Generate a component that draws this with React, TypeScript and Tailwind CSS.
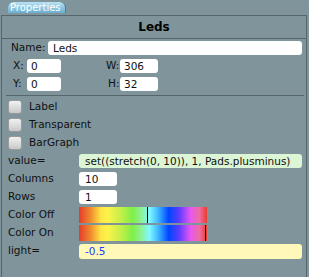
import React from "react";

const grad =
  "linear-gradient(to right, #e63b2a 0%, #f08a2e 9%, #fde445 17%, #fff24a 22%, #c8f048 32%, #7fee48 42%, #8ef28e 48%, #7ff8ff 55%, #3fb4ff 62%, #0046ff 70%, #5a3cff 78%, #e656f2 87%, #ee6ea0 94%, #e83c30 100%)";

function ColorBar({ marker }: { marker: number }) {
  return (
    <div className="relative w-[128px] h-[16px]" style={{ background: grad }}>
      <div className="absolute top-0 bottom-0 w-[1px] bg-black" style={{ left: marker }} />
    </div>
  );
}

function Check({ label }: { label: string }) {
  return (
    <div className="h-[18px] flex items-center pl-[6px]">
      <div className="w-[14px] h-[14px] rounded-[3px] border border-[#9a9a9a] bg-gradient-to-b from-[#f2f2f2] to-[#c9c9c9]" />
      <span className="ml-[7px]">{label}</span>
    </div>
  );
}

export default function App() {
  return (
    <div
      className="w-[309px] h-[277px] bg-[#7f949b] overflow-hidden text-[10.5px] text-[#111]"
      style={{ fontFamily: '"DejaVu Sans", Verdana, sans-serif' }}
    >
      <div className="h-[15px] pl-[8px] pt-[2px]">
        <div className="w-[58px] h-[11px] rounded-t-[6px] bg-gradient-to-b from-[#b8e2f2] to-[#6aaed0] border-r border-[#4f7a8c] text-white text-[10px] leading-[11px] pl-[2px]">
          Properties
        </div>
      </div>
      <div className="ml-[1px] w-[306px] h-[262px] border-t border-l border-r border-[#56666c]">
        <div className="h-[23px] border-b border-[#56666c] flex items-center justify-center font-bold text-[12px] text-black">
          Leds
        </div>
        <div className="pt-[2px] flex flex-col gap-[4px]">
          <div className="h-[14px] flex items-center">
            <span className="ml-[9px] w-[37px]">Name:</span>
            <div className="w-[254px] h-[14px] bg-white rounded-[3px] pl-[5px] leading-[14px]">Leds</div>
          </div>
          <div className="h-[14px] flex items-center">
            <span className="ml-[11px] w-[14px]">X:</span>
            <div className="w-[34px] h-[14px] bg-white rounded-[3px] pl-[4px] leading-[14px]">0</div>
            <span className="ml-[45px] w-[14px]">W:</span>
            <div className="w-[38px] h-[14px] bg-white rounded-[3px] pl-[4px] leading-[14px]">306</div>
          </div>
          <div className="h-[14px] flex items-center">
            <span className="ml-[11px] w-[14px]">Y:</span>
            <div className="w-[34px] h-[14px] bg-white rounded-[3px] pl-[4px] leading-[14px]">0</div>
            <span className="ml-[47px] w-[12px]">H:</span>
            <div className="w-[38px] h-[14px] bg-white rounded-[3px] pl-[4px] leading-[14px]">32</div>
          </div>
        </div>
        <div className="mt-[4px] ml-[4px] w-[298px] h-[1px] bg-[#56666c]" />
        <div className="mt-[2px] flex flex-col">
          <Check label="Label" />
          <Check label="Transparent" />
          <Check label="BarGraph" />
          <div className="h-[18px] flex items-center">
            <span className="ml-[6px] w-[71px]">value=</span>
            <div className="w-[223px] h-[14px] bg-[#dcf5d4] rounded-[3px] pl-[6px] leading-[14px]">
              set((stretch(0, 10)), 1, Pads.plusminus)
            </div>
          </div>
          <div className="h-[18px] flex items-center">
            <span className="ml-[6px] w-[71px]">Columns</span>
            <div className="w-[38px] h-[14px] bg-white rounded-[3px] pl-[6px] leading-[14px]">10</div>
          </div>
          <div className="h-[18px] flex items-center">
            <span className="ml-[6px] w-[71px]">Rows</span>
            <div className="w-[38px] h-[14px] bg-white rounded-[3px] pl-[6px] leading-[14px]">1</div>
          </div>
          <div className="h-[18px] flex items-center">
            <span className="ml-[6px] w-[71px]">Color Off</span>
            <ColorBar marker={68} />
          </div>
          <div className="h-[18px] flex items-center">
            <span className="ml-[6px] w-[71px]">Color On</span>
            <ColorBar marker={126} />
          </div>
          <div className="h-[18px] flex items-center">
            <span className="ml-[6px] w-[71px]">light=</span>
            <div className="w-[223px] h-[15px] bg-[#fff8b8] rounded-[3px] pl-[6px] leading-[15px] text-[#1a3cff]">-0.5</div>
          </div>
        </div>
      </div>
    </div>
  );
}
